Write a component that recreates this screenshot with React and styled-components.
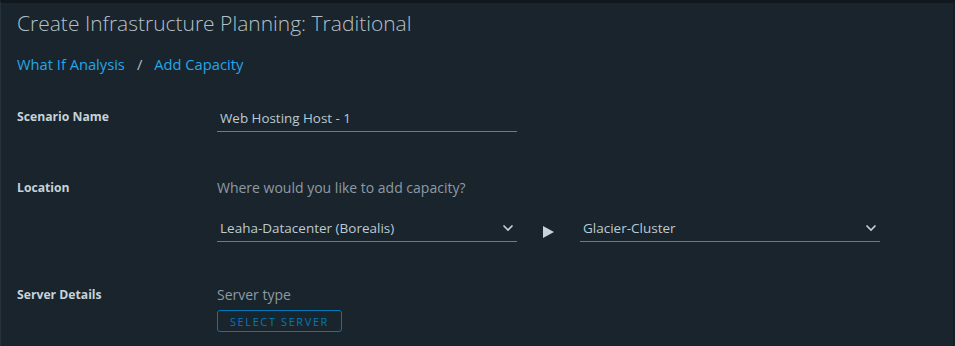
import React from 'react';
import styled, { createGlobalStyle } from 'styled-components';

const GlobalStyle = createGlobalStyle`
  html, body {
    margin: 0;
    padding: 0;
    background: #1a2730;
  }
  body {
    font-family: 'Open Sans', sans-serif;
  }
`;

const Page = styled.div`
  height: 346px;
  box-sizing: border-box;
  border-top: 3px solid #10181d;
  border-left: 1px solid #24333b;
  border-right: 2px solid #141e24;
  background: #1a242c;
  padding: 0 16px;
  overflow: hidden;
`;

const Title = styled.h1`
  margin: 0;
  padding-top: 8px;
  font-size: 21px;
  line-height: 24px;
  font-weight: 300;
  color: #b3c0c8;
`;

const Crumbs = styled.nav`
  display: flex;
  align-items: center;
  gap: 12px;
  margin-top: 20px;
  font-size: 14.7px;
  line-height: 18px;
`;

const Crumb = styled.a`
  color: #24a6ea;
  text-decoration: none;
`;

const Slash = styled.span`
  color: #b3c0c8;
`;

const Form = styled.div`
  margin-top: 35px;
  display: flex;
  flex-direction: column;
`;

const Row = styled.div`
  display: grid;
  grid-template-columns: 200px 1fr;
  min-height: ${p => p.$h}px;
`;

const Label = styled.div`
  font-size: 12.2px;
  font-weight: 700;
  color: #c5d2da;
  line-height: 18px;
  padding-top: ${p => p.$pt || 0}px;
`;

const Field = styled.div`
  display: flex;
  flex-direction: column;
  align-items: flex-start;
`;

const TextInput = styled.div`
  width: 300px;
  box-sizing: border-box;
  padding: 0 3px 3px;
  border-bottom: 1px solid #6c7b84;
  font-size: 13.4px;
  line-height: 20px;
  color: #bccad3;
`;

const Helper = styled.div`
  font-size: 14px;
  line-height: 20px;
  color: #8c9ba5;
  margin-bottom: ${p => p.$mb || 0}px;
`;

const SelectRow = styled.div`
  display: flex;
  align-items: center;
  gap: 26px;
`;

const Select = styled.div`
  width: 300px;
  box-sizing: border-box;
  display: flex;
  align-items: center;
  justify-content: space-between;
  padding: 0 3px 3px;
  border-bottom: 1px solid #6c7b84;
  font-size: 13.5px;
  line-height: 20px;
  color: #bccad3;
`;

const Arrow = styled.span`
  width: 0;
  height: 0;
  border-top: 6px solid transparent;
  border-bottom: 6px solid transparent;
  border-left: 11px solid #c9d2d8;
  margin-top: 3px;
`;

const Button = styled.button`
  margin-top: 5px;
  height: 22px;
  width: 125px;
  padding: 0;
  background: transparent;
  border: 1px solid #0079b8;
  border-radius: 3px;
  color: #0079b8;
  font-family: inherit;
  font-size: 11px;
  letter-spacing: 1.6px;
  text-transform: uppercase;
`;

const Chevron = () => (
  <svg width="12" height="8" viewBox="0 0 12 8">
    <path d="M1.5 1.5 L6 6 L10.5 1.5" fill="none" stroke="#c9d2d8" strokeWidth="1.6" />
  </svg>
);

export default function App() {
  return (
    <>
      <GlobalStyle />
      <Page>
        <Title>Create Infrastructure Planning: Traditional</Title>
        <Crumbs>
          <Crumb href="#">What If Analysis</Crumb>
          <Slash>/</Slash>
          <Crumb href="#">Add Capacity</Crumb>
        </Crumbs>
        <Form>
          <Row $h={70}>
            <Label>Scenario Name</Label>
            <Field>
              <TextInput>Web Hosting Host - 1</TextInput>
            </Field>
          </Row>
          <Row $h={107}>
            <Label $pt={1}>Location</Label>
            <Field>
              <Helper $mb={20}>Where would you like to add capacity?</Helper>
              <SelectRow>
                <Select>Leaha-Datacenter (Borealis)<Chevron /></Select>
                <Arrow />
                <Select>Glacier-Cluster<Chevron /></Select>
              </SelectRow>
            </Field>
          </Row>
          <Row $h={60}>
            <Label $pt={1}>Server Details</Label>
            <Field>
              <Helper>Server type</Helper>
              <Button>Select Server</Button>
            </Field>
          </Row>
        </Form>
      </Page>
    </>
  );
}
